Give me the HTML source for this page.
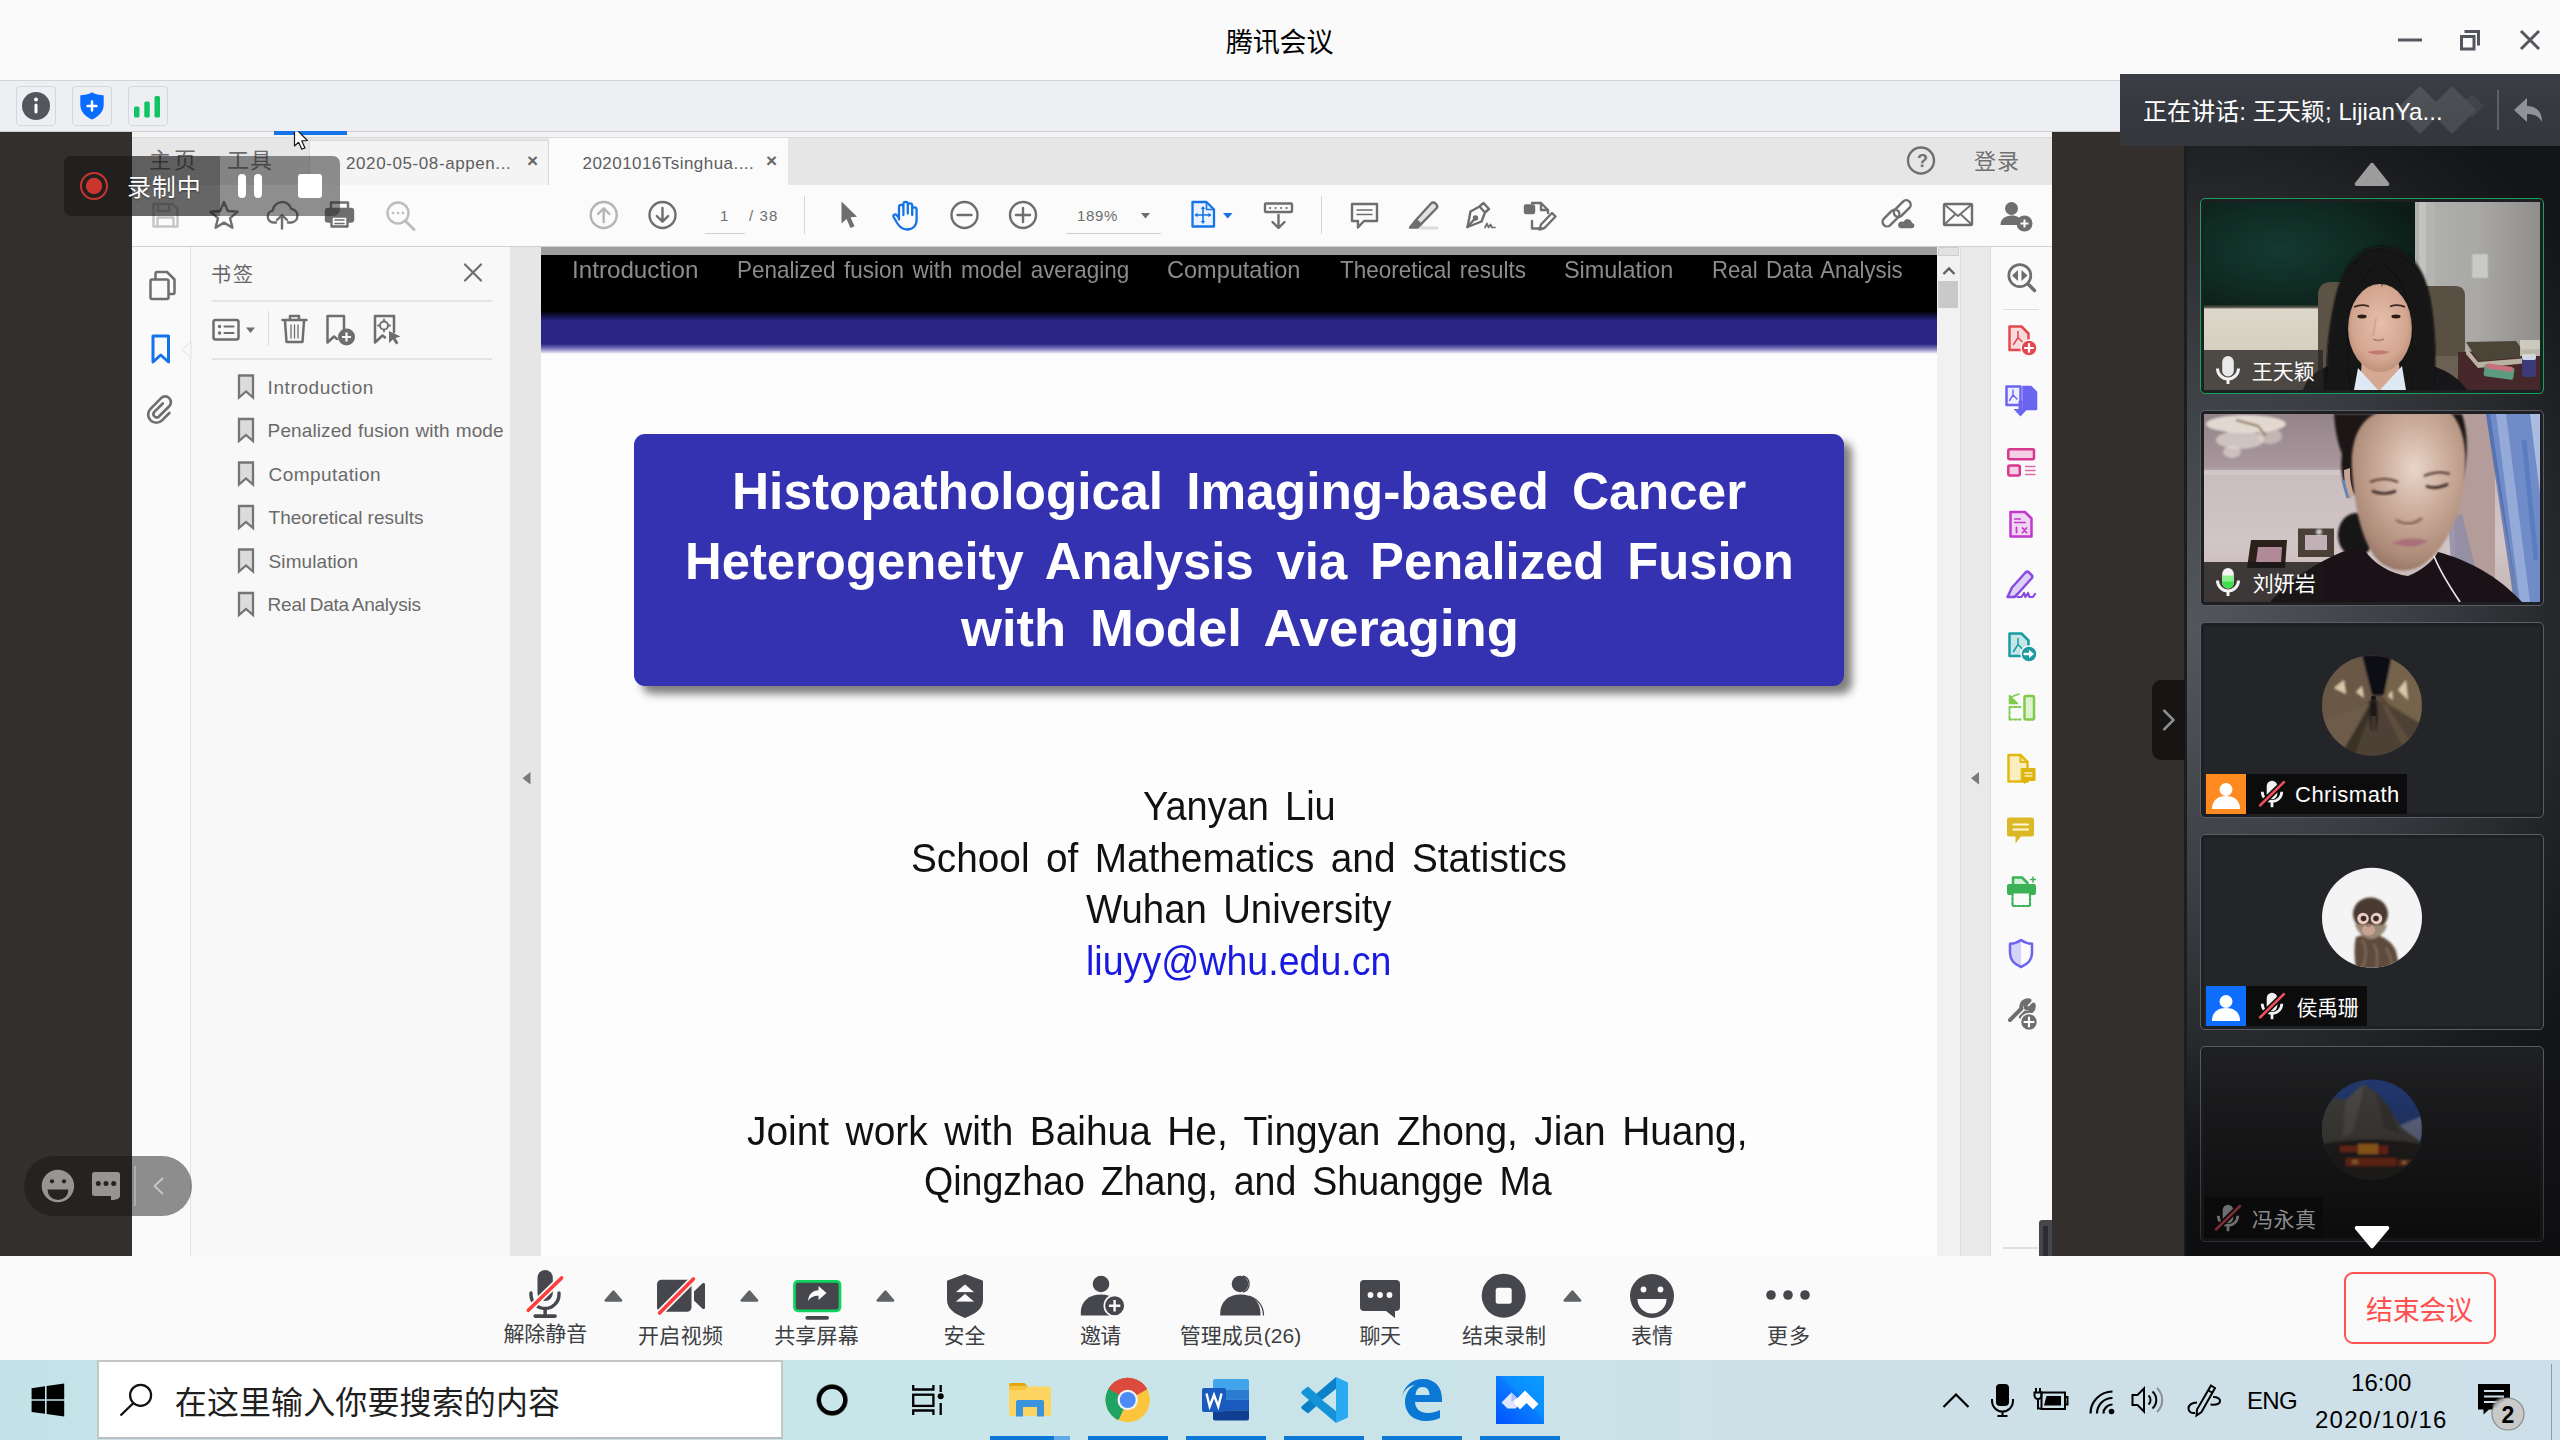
<!DOCTYPE html>
<html lang="zh-CN"><head>
<meta charset="utf-8">
<title>腾讯会议</title>
<style>
*{box-sizing:border-box;margin:0;padding:0}
html,body{width:2560px;height:1440px;overflow:hidden;background:#fafafa}
body{font-family:"Liberation Sans","Noto Sans CJK SC",sans-serif;position:relative;color:#222}
.abs,.t,.b{position:absolute}
.t{white-space:nowrap;line-height:1.4}
.cjk{font-family:"Liberation Sans","Noto Sans CJK SC",sans-serif}
svg.L{position:absolute;left:0;top:0;width:2560px;height:1440px;overflow:visible;pointer-events:none}
#titlebar{left:0;top:0;width:2560px;height:80px;background:#fafafa}
#infobar{left:0;top:80px;width:2560px;height:52px;background:#eeeff3;border-top:1px solid #d4d4d8;border-bottom:1px solid #d0d0d4}
#stage{left:0;top:132px;width:2560px;height:1124px;background:#332f2d}
#shared{left:132px;top:132px;width:1920px;height:1124px;background:#fbfbfb}
#rpanel{left:2184px;top:132px;width:376px;height:1124px;background:radial-gradient(ellipse 135% 52% at 0% 44%,#53565c 0%,#484b51 22%,#3b3e43 45%,#2a2c30 68%,#1b1c1f 88%,#141517 100%);border-left:3px solid #1c1d20}
#toolbar{left:0;top:1256px;width:2560px;height:104px;background:#fafafa}
#taskbar{left:0;top:1360px;width:2560px;height:80px;background:linear-gradient(90deg,#c3e3e8 0,#c8e6ea 30%,#c9e4e9 55%,#cde0e8 70%,#cddfe8 100%)}
.ibox{top:86px;width:40px;height:40px;border:1px solid #d6d7db;border-radius:4px;background:#eeeff3}
/* pdf viewer */
.pui{color:#6e6e6e}
.bm{font-size:19px;color:#6a6a6a}
.hd{font-size:24px;color:#8c8c8c}
.ttl{font-size:52px;font-weight:bold;color:#fff}
.au{font-size:41px;color:#111}
.lbl{font-size:21px;color:#3c3e42}
.nm{font-size:22px;color:#fff}
</style>
</head>
<body>
<div id="titlebar" class="abs"></div>
<div id="infobar" class="abs"></div>
<div id="stage" class="abs"></div>
<div id="shared" class="abs"></div>
<div id="rpanel" class="abs"></div>
<div id="toolbar" class="abs"></div>
<div id="taskbar" class="abs"></div>
<span class="t cjk" style="font-size: 27px; color: rgb(0, 0, 0); letter-spacing: -0.2px; left: 1226px; line-height: 38px; top: 23.85px;">腾讯会议</span>
<svg class="L" viewBox="0 0 2560 1440">
<g fill="none" stroke="#53565c" stroke-width="3">
<path d="M2398 40H2422"></path>
<rect x="2461.5" y="36.5" width="12.5" height="12.5"></rect>
<path d="M2464.5 31.5H2478.5V45.5"></path>
<path d="M2521 31L2539 49M2539 31L2521 49"></path>
</g>
</svg>
<div class="abs ibox" style="left:16px"></div><div class="abs ibox" style="left:72px"></div><div class="abs ibox" style="left:128px"></div>
<svg class="L" viewBox="0 0 2560 1440">
<circle cx="36" cy="106" r="14" fill="#53565c"></circle>
<circle cx="36" cy="99.500" r="2" fill="#fff"></circle><rect x="34.500" y="103.500" width="3" height="10" rx="1.500" fill="#fff"></rect>
<path d="M92 92.200c-3.600 2.200-7.600 3-11.700 3v9.500c0 7.200 5.400 12 11.700 14.800 6.300-2.800 11.700-7.600 11.700-14.800v-9.500c-4.100 0-8.100-.8-11.700-3z" fill="#0a6cff"></path>
<path d="M92 101.500v9M87.500 106h9" stroke="#fff" stroke-width="2.400" stroke-linecap="round"></path>
<rect x="134" y="106.500" width="5.500" height="11" rx="1.500" fill="#10c463"></rect>
<rect x="144.300" y="101.500" width="5.500" height="16" rx="1.500" fill="#10c463"></rect>
<rect x="154.500" y="96" width="5.500" height="21.500" rx="1.500" fill="#10c463"></rect>
</svg>
<!-- ===== PDF viewer backgrounds ===== -->
<div class="b" style="left:132px;top:132px;width:1920px;height:6px;background:#f3f3f3;border-bottom:1px solid #dcdcdc"></div>
<div class="b" style="left:274px;top:131px;width:73px;height:4px;background:#1473e6"></div>
<div class="b" style="left:132px;top:138px;width:1920px;height:47px;background:#e6e6e6"></div>
<div class="b" style="left:309px;top:140px;width:240px;height:45px;background:#f4f4f4;border:1px solid #d8d8d8;border-bottom:none"></div>
<div class="b" style="left:549px;top:138px;width:239px;height:48px;background:#fbfbfb"></div>
<div class="b" style="left:132px;top:185px;width:1920px;height:62px;background:#fbfbfb;border-bottom:1px solid #d0d0d0"></div>
<div class="b" style="left:132px;top:247px;width:59px;height:1009px;background:#fafafa;border-right:1px solid #e2e2e2"></div>
<div class="b" style="left:191px;top:247px;width:319px;height:1009px;background:#f8f8f8"></div>
<div class="b" style="left:510px;top:247px;width:31px;height:1009px;background:#e6e6e6"></div>
<div class="b" style="left:541px;top:247px;width:1396px;height:1009px;background:#fdfdfd"></div>
<div class="b" style="left:541px;top:247px;width:1396px;height:9px;background:#9e9e9e"></div>
<div class="b" style="left:541px;top:255px;width:1396px;height:99px;background:linear-gradient(180deg,#000 0,#000 56px,#141342 61px,#292688 66px,#292688 89px,#8583c0 94px,#fdfdfd 99px)"></div>
<div class="b" style="left:1937px;top:247px;width:23px;height:1009px;background:#f1f1f1"></div>
<div class="b" style="left:1938px;top:247px;width:21px;height:9px;background:#e2e2e2;border:1px solid #cfcfcf"></div>
<div class="b" style="left:1938px;top:281px;width:20px;height:27px;background:#c9c9c9"></div>
<div class="b" style="left:1960px;top:247px;width:30px;height:1009px;background:#e9e9e9;border-left:1px solid #dedede"></div>
<div class="b" style="left:1990px;top:247px;width:62px;height:1009px;background:#fafafa;border-left:1px solid #e0e0e0"></div>
<!-- panel lines -->
<div class="b" style="left:212px;top:300px;width:280px;height:2px;background:#e4e4e4"></div>
<div class="b" style="left:212px;top:358px;width:280px;height:2px;background:#e4e4e4"></div>
<div class="b" style="left:268px;top:311px;width:1px;height:35px;background:#dcdcdc"></div>
<div class="b" style="left:804px;top:196px;width:1px;height:38px;background:#d6d6d6"></div>
<div class="b" style="left:1321px;top:196px;width:1px;height:38px;background:#d6d6d6"></div>
<div class="b" style="left:705px;top:233px;width:40px;height:1px;background:#d0d0d0"></div>
<div class="b" style="left:1066px;top:233px;width:95px;height:1px;background:#d0d0d0"></div>
<div class="b" style="left:2003px;top:309px;width:36px;height:1px;background:#dcdcdc"></div>
<div class="b" style="left:2039px;top:1220px;width:13px;height:36px;background:#45474d;border-radius:3px 0 0 0"></div>
<div class="b" style="left:2043px;top:1226px;width:5px;height:30px;background:#2b2c31"></div>
<div class="b" style="left:2003px;top:1247px;width:35px;height:2px;background:#e0e0e0"></div>
<!-- ===== slide ===== -->
<div class="b" style="left:634px;top:434px;width:1210px;height:252px;border-radius:11px;background:#3432b0;box-shadow:8px 8px 8px rgba(0,0,0,.5)"></div>
<span class="t hd" style="letter-spacing: 0px; transform: scaleX(1.0076); transform-origin: 0px 0px; word-spacing: 2.5px; left: 572.48px; line-height: 34px; top: 253.4px;">Introduction</span>
<span class="t hd" style="letter-spacing: 0px; transform: scaleX(0.9347); transform-origin: 0px 0px; word-spacing: 2.5px; left: 737.07px; line-height: 34px; top: 253.4px;">Penalized fusion with model averaging</span>
<span class="t hd" style="letter-spacing: 0px; transform: scaleX(0.9796); transform-origin: 0px 0px; word-spacing: 2.5px; left: 1167.02px; line-height: 34px; top: 253.4px;">Computation</span>
<span class="t hd" style="letter-spacing: 0px; transform: scaleX(0.9367); transform-origin: 0px 0px; word-spacing: 2.5px; left: 1340px; line-height: 34px; top: 253.4px;">Theoretical results</span>
<span class="t hd" style="letter-spacing: 0px; transform: scaleX(0.9753); transform-origin: 0px 0px; word-spacing: 2.5px; left: 1564.02px; line-height: 34px; top: 253.4px;">Simulation</span>
<span class="t hd" style="letter-spacing: 0px; transform: scaleX(0.9238); transform-origin: 0px 0px; word-spacing: 2.5px; left: 1712.08px; line-height: 34px; top: 253.4px;">Real Data Analysis</span>
<span class="t ttl" style="letter-spacing: 0px; transform: scaleX(0.9881); transform-origin: 0px 0px; word-spacing: 9px; left: 732.04px; line-height: 73px; top: 454.7px;">Histopathological Imaging-based Cancer</span>
<span class="t ttl" style="letter-spacing: 0px; transform: scaleX(0.9768); transform-origin: 0px 0px; word-spacing: 9px; left: 685.07px; line-height: 73px; top: 524.7px;">Heterogeneity Analysis via Penalized Fusion</span>
<span class="t ttl" style="letter-spacing: 0px; transform: scaleX(1.0115); transform-origin: 0px 0px; word-spacing: 9px; left: 961.01px; line-height: 73px; top: 592px;">with Model Averaging</span>
<span class="t au" style="letter-spacing: 0px; transform: scaleX(0.9258); transform-origin: 0px 0px; word-spacing: 6px; left: 1143px; line-height: 57px; top: 778px;">Yanyan Liu</span>
<span class="t au" style="letter-spacing: 0px; transform: scaleX(0.9452); transform-origin: 0px 0px; word-spacing: 6px; left: 910.55px; line-height: 57px; top: 830px;">School of Mathematics and Statistics</span>
<span class="t au" style="letter-spacing: 0px; transform: scaleX(0.9357); transform-origin: 0px 0px; word-spacing: 6px; left: 1086px; line-height: 57px; top: 881px;">Wuhan University</span>
<span class="t au" style="color: rgb(26, 25, 224); letter-spacing: 0px; transform: scaleX(0.9164); transform-origin: 0px 0px; word-spacing: 6px; left: 1086.17px; line-height: 57px; top: 933px;">liuyy@whu.edu.cn</span>
<span class="t au" style="letter-spacing: 0px; transform: scaleX(0.948); transform-origin: 0px 0px; word-spacing: 6px; left: 747px; line-height: 57px; top: 1103px;">Joint work with Baihua He, Tingyan Zhong, Jian Huang,</span>
<span class="t au" style="letter-spacing: 0px; transform: scaleX(0.9163); transform-origin: 0px 0px; word-spacing: 6px; left: 924.08px; line-height: 57px; top: 1153px;">Qingzhao Zhang, and Shuangge Ma</span>
<!-- ===== pdf ui text ===== -->
<span class="t cjk pui" style="font-size: 22px; color: rgb(106, 106, 106); letter-spacing: 3px; left: 149px; line-height: 31px; top: 145px;">主页</span>
<span class="t cjk pui" style="font-size: 22px; color: rgb(106, 106, 106); letter-spacing: 1px; left: 227px; line-height: 31px; top: 144.5px;">工具</span>
<span class="t pui" style="font-size: 17px; color: rgb(94, 94, 94); letter-spacing: 0.592px; left: 346px; line-height: 24px; top: 151.7px;">2020-05-08-appen...</span>
<span class="t pui" style="font-size: 17px; color: rgb(94, 94, 94); letter-spacing: 0.455px; left: 582.5px; line-height: 24px; top: 151.7px;">20201016Tsinghua....</span>
<span class="t pui" style="font-size: 19px; font-weight: bold; color: rgb(102, 102, 102); letter-spacing: 0px; left: 527px; line-height: 27px; top: 146.5px;">×</span>
<span class="t pui" style="font-size: 19px; font-weight: bold; color: rgb(102, 102, 102); letter-spacing: 0px; left: 766px; line-height: 27px; top: 146.5px;">×</span>
<span class="t cjk pui" style="font-size: 22px; color: rgb(112, 112, 112); letter-spacing: 1px; left: 1974px; line-height: 31px; top: 146px;">登录</span>
<span class="t pui" style="font-size: 15px; letter-spacing: 0px; left: 720px; line-height: 21px; top: 204.5px;">1</span>
<span class="t pui" style="font-size: 15px; letter-spacing: 1.108px; left: 749px; line-height: 21px; top: 204.5px;">/ 38</span>
<span class="t pui" style="font-size: 15px; letter-spacing: 0.658px; left: 1077px; line-height: 21px; top: 204.5px;">189%</span>
<span class="t cjk pui" style="font-size: 20px; color: rgb(102, 102, 102); letter-spacing: 2px; left: 211px; line-height: 28px; top: 260.5px;">书签</span>
<span class="t bm" style="letter-spacing: 0.589px; left: 267.6px; line-height: 27px; top: 373.7px;">Introduction</span>
<span class="t bm" style="letter-spacing: 0.112px; word-spacing: 0.622px; left: 267.6px; line-height: 27px; top: 417.2px;">Penalized fusion with mode</span>
<span class="t bm" style="letter-spacing: 0.424px; left: 268.6px; line-height: 27px; top: 460.7px;">Computation</span>
<span class="t bm" style="letter-spacing: -0.011px; word-spacing: -0.131px; left: 268.6px; line-height: 27px; top: 504.2px;">Theoretical results</span>
<span class="t bm" style="letter-spacing: 0.084px; left: 268.6px; line-height: 27px; top: 547.7px;">Simulation</span>
<span class="t bm" style="letter-spacing: -0.216px; word-spacing: -1.223px; left: 267.6px; line-height: 27px; top: 591.2px;">Real Data Analysis</span>
<!-- ===== pdf toolbar icons ===== -->
<svg class="L" viewBox="0 0 2560 1440">
<g fill="none" stroke="#6e6e6e" stroke-width="2.400" stroke-linejoin="round" stroke-linecap="round">
<!-- save (disabled) -->
<g stroke="#c6c6c6"><path d="M153.500 204h19l5 5v17.500h-24z"></path><path d="M158 204v7h11v-7M157.500 226.500v-9h16v9"></path></g>
<!-- star -->
<path d="M224 202l3.800 9 9.700.8-7.400 6.400 2.300 9.500-8.400-5.100-8.400 5.100 2.300-9.500-7.400-6.400 9.700-.8z"></path>
<!-- cloud upload -->
<path d="M276 222.500h-2.500a6 6 0 0 1-.8-11.900 9.500 9.500 0 0 1 18.600-1.600 6.800 6.800 0 0 1 .2 13.500H288"></path><path d="M282 228.500v-13M277 220l5-5 5 5"></path>
<!-- printer -->
<path d="M331 209v-6.500h17v6.500"></path><rect x="326" y="209" width="27" height="12.500" rx="2" fill="#6e6e6e"></rect><rect x="331.500" y="216.500" width="16" height="10" fill="#fbfbfb"></rect><path d="M335 220h9M335 223.500h9" stroke-width="1.600"></path>
<!-- search (disabled) -->
<g stroke="#bdbdbd"><circle cx="398" cy="213" r="10.500"></circle><path d="M405.500 221l8.500 8.500" stroke-width="3"></path><path d="M393 213h.1M398 213h.1M403 213h.1" stroke-width="2.600"></path></g>
<!-- up (disabled) / down -->
<g stroke="#b4b4b4"><circle cx="603.700" cy="215" r="13"></circle><path d="M603.700 222v-13M598 214l5.700-5.700 5.700 5.700"></path></g>
<circle cx="662.500" cy="215" r="13"></circle><path d="M662.500 208v13M656.800 216l5.700 5.700 5.700-5.700"></path>
<!-- minus / plus -->
<circle cx="964.500" cy="215" r="13"></circle><path d="M957.500 215h14"></path>
<circle cx="1023" cy="215" r="13"></circle><path d="M1016 215h14M1023 208v14"></path>
<!-- scroll mode -->
<rect x="1265" y="203.500" width="27" height="8.500" rx="1"></rect><path d="M1270 208h.1M1275.500 208h.1M1281 208h.1M1286.500 208h.1" stroke-width="2.200"></path><path d="M1278.500 215v12.500M1272.500 222l6 6 6-6"></path>
<!-- comment -->
<path d="M1352 204h25v17h-13l-6 6.500v-6.500h-6z"></path><path d="M1357 210h15M1357 214.500h15" stroke-width="1.600"></path>
<!-- highlighter -->
<path d="M1416 220l15-16.500a3 3 0 0 1 4.500 0l.8.800a3 3 0 0 1 0 4.200l-15.500 15.800z" fill="#e2e2e2"></path><path d="M1416 220l-6 7.500h8l3-3.200" fill="#6e6e6e"></path><path d="M1421 228h16" stroke="#dcdcdc" stroke-width="3"></path>
<!-- sign pen -->
<path d="M1483.500 203l5.500 6-4 3.500-5.500-6zM1479.500 206.500l-9 5-3 15.500 14-5.500 3.500-9"></path><path d="M1467.500 227l7-8"></path><circle cx="1475.500" cy="218" r="1.500" fill="#6e6e6e"></circle><path d="M1485 227.500l2-4 1.500 4 2-3 1.500 3h3" stroke-width="1.700"></path>
<!-- stamp / edit -->
<path d="M1532 203h9l7 7v3M1541 203v7h7M1532 221v7.500h10"></path><rect x="1525" y="205.500" width="9" height="7.500" rx="1" fill="#6e6e6e"></rect><path d="M1552 213l3.500 3.500-11 11.500-5 1.500 1.500-5z" fill="#fbfbfb"></path>
<!-- link + cloud -->
<rect x="1892.300" y="204.100" width="20" height="9" rx="4.500" transform="rotate(-45 1902.300 208.600)"></rect>
<rect x="1881" y="213.500" width="20" height="9" rx="4.500" transform="rotate(-45 1891 218)"></rect>
<path d="M1900 229h12a3.400 3.400 0 0 0 .6-6.700 5 5 0 0 0-9.300-1.300 4.100 4.100 0 0 0-3.300 8z" fill="#6e6e6e" stroke="#fbfbfb" stroke-width="1.500"></path>
<!-- mail -->
<rect x="1944" y="204" width="28" height="21" rx="1"></rect><path d="M1944.500 204.500l13.500 11.500 13.500-11.500M1944.500 224.500l10-9.500M1971.500 224.500l-10-9.500" stroke-width="1.800"></path>
<!-- help -->
<circle cx="1921" cy="160.500" r="13" stroke="#707070"></circle>
</g>
<!-- person+ -->
<g fill="#6e6e6e"><circle cx="2011.500" cy="208.500" r="6.500"></circle><path d="M2000.500 225c0-6 5-9.500 11-9.500s9 2.500 10.500 6.500a8 8 0 0 0-4 3z"></path><circle cx="2024.500" cy="223.500" r="8"></circle></g>
<path d="M2024.500 219.500v8M2020.500 223.500h8" stroke="#fbfbfb" stroke-width="2"></path>
<!-- cursor arrow -->
<path d="M841.500 201.500v22l5-4.500 4 9 4-1.800-4-9 6.500-.5z" fill="#6e6e6e"></path>
<!-- hand (blue) -->
<g fill="none" stroke="#1473e6" stroke-width="2.300" stroke-linecap="round" stroke-linejoin="round">
<path d="M899 219.500v-12.500a2.200 2.200 0 0 1 4.400 0v8M903.400 213v-9a2.200 2.200 0 0 1 4.400 0v9M907.800 213.500v-8a2.200 2.200 0 0 1 4.400 0v9M912.200 215v-5.500a2.200 2.200 0 0 1 4.400 0v10c0 6-3.500 10-9.500 10-5 0-7.500-2.500-10-6.500l-3.500-6c-1-2 1.500-3.500 3-2l2.400 3"></path>
</g>
<!-- dropdown arrows -->
<path d="M1141 213h9l-4.500 5.500z" fill="#6e6e6e"></path>
<path d="M1223 213h9.500l-4.750 5.500z" fill="#1473e6"></path>
<!-- fit page (blue) -->
<g fill="none" stroke="#1473e6" stroke-width="2.300" stroke-linejoin="round"><path d="M1192.500 202h14l7.500 7.500v17h-21.500z" fill="#eaf2fd"></path><path d="M1206.500 202v7.500h7.500" stroke-width="1.600"></path></g>
<g stroke="#1473e6" stroke-width="1.600" fill="#1473e6"><path d="M1203 207.500v15M1195.500 215h15"></path><path d="M1203 206l2.200 3h-4.400zM1203 224l2.200-3h-4.400zM1194.500 215l3-2.200v4.400zM1211.500 215l-3-2.200v4.400z" stroke="none"></path></g>
</svg>
<span class="t pui" style="font-size: 18px; font-weight: bold; color: rgb(112, 112, 112); letter-spacing: 0px; left: 1917px; line-height: 25px; top: 149px;">?</span>
<!-- ===== pdf side icons ===== -->
<svg class="L" viewBox="0 0 2560 1440">
<defs>
<path id="bmk" d="M0 0h14v22l-7-6L0 22z"></path>
</defs>
<g fill="none" stroke="#6e6e6e" stroke-width="2.500" stroke-linejoin="round" stroke-linecap="round">
<!-- pages -->
<path d="M155.500 279.500v-6a1.500 1.500 0 0 1 1.500-1.500h10l7.500 7.500v13a1.500 1.500 0 0 1-1.500 1.500h-5.500"></path><path d="M150.500 281a1.500 1.500 0 0 1 1.500-1.500h15a1.500 1.500 0 0 1 1.500 1.500v16.500a1.500 1.500 0 0 1-1.500 1.500h-15a1.500 1.500 0 0 1-1.500-1.500z" fill="#fafafa"></path>
<!-- paperclip -->
<path d="M163 405l-9.500 9.500a3.600 3.600 0 0 0 5 5l11.500-11.500a6.200 6.200 0 0 0-8.800-8.800l-11.500 11.700a8.800 8.800 0 0 0 12.500 12.500l8-8" stroke-width="2.900" transform="translate(160 408.500) scale(.92) translate(-160 -410.500)"></path>
<!-- close X -->
<path d="M465 264.500l16 16M481 264.500l-16 16" stroke-width="2.200"></path>
<!-- list icon -->
<rect x="213.500" y="320" width="25" height="19.500" rx="2"></rect><path d="M219.500 326.500h.1M219.500 333h.1" stroke-width="3.400"></path><path d="M224.500 326.500h9M224.500 333h9" stroke-width="2.200"></path>
<!-- trash -->
<path d="M282.500 320h24M290 319.500v-3.500h9v3.500M285 321l1.500 21h16l1.500-21"></path><path d="M291 325v13M294.500 325v13M298 325v13" stroke-width="1.300"></path>
<!-- bookmark+ -->
<path d="M327.500 316h16.500v14M327.500 316v26.500l6.500-6 3 2.500"></path>
<!-- bookmark find -->
<path d="M375 316h19v16M375 316v26.500l7.500-7 2.500 2"></path><circle cx="384" cy="325.500" r="4" stroke-width="1.800"></circle><path d="M384 319.500v1.500M384 330v1.500M378 325.500h1.500M388.500 325.500h1.500" stroke-width="1.800"></path>
<!-- magnifier tool -->
<circle cx="2019.800" cy="275.600" r="11" stroke-width="2.700"></circle><path d="M2028 284l6.500 6.500" stroke-width="3.400"></path>
</g>
<g fill="#6e6e6e">
<path d="M246 327.500h9l-4.500 5.500z"></path>
<circle cx="346.500" cy="337" r="8.500"></circle>
<path d="M389 331l11.500 5.500-5 1.500 3 5-2.500 1.500-3-5-4 3.500z"></path>
<path d="M2018 270v11l-6-5.500zM2021.500 270v11l6-5.500z"></path>
<path d="M1979 772v12.500l-8-6.250z" fill="#7a7a7a"></path>
<path d="M530.500 772v12.500l-8-6.250z" fill="#7a7a7a"></path>
</g>
<path d="M346.500 332.500v9M342 337h9" stroke="#f8f8f8" stroke-width="2.200"></path>
<!-- scrollbar arrow -->
<path d="M1943.500 274l5.500-5.500 5.500 5.500" fill="none" stroke="#606060" stroke-width="2.400"></path>
<!-- nav pointer -->
<path d="M191 341l-9 8.500 9 8.500z" fill="#f8f8f8" stroke="#e2e2e2" stroke-width="1"></path>
<!-- blue bookmark -->
<path d="M153 336h15.500v26l-7.750-7-7.750 7z" fill="#fafafa" stroke="#1473e6" stroke-width="3" stroke-linejoin="round"></path>
<!-- bookmark items -->
<g fill="#dcdcdc" stroke="#757575" stroke-width="2.300" stroke-linejoin="miter">
<use href="#bmk" x="239" y="375.500"></use><use href="#bmk" x="239" y="419"></use><use href="#bmk" x="239" y="462.500"></use><use href="#bmk" x="239" y="506"></use><use href="#bmk" x="239" y="549.500"></use><use href="#bmk" x="239" y="593"></use>
</g>
</svg>
<!-- ===== pdf right tool pane icons ===== -->
<svg class="L" viewBox="0 0 2560 1440">
<g fill="none" stroke-width="2.500" stroke-linejoin="round" stroke-linecap="round">
<!-- create pdf (red) -->
<path d="M2009.500 326.500h12l7 7v16.500h-19z" fill="#f9d9dc" stroke="#e34850"></path><path d="M2018 331.500v6l-4.500 7M2018 337.500l5 5" stroke="#e34850" stroke-width="1.500"></path>
<circle cx="2029" cy="348" r="8" fill="#e34850" stroke="#fafafa" stroke-width="1.500"></circle><path d="M2029 344v8M2025 348h8" stroke="#fff" stroke-width="2.200"></path>
<!-- export pdf (periwinkle) -->
<path d="M2023 386.500h8l5.500 5.500v17.500h-13.500z" fill="#6a64f0" stroke="#6a64f0" stroke-width="1.500"></path>
<path d="M2006.500 386.500h14v18.500h-14z" fill="#efeefd" stroke="#6a64f0"></path><path d="M2013 390v5l-3.500 5.500M2013 395l4 4" stroke="#6a64f0" stroke-width="1.400"></path>
<path d="M2020.500 402v8" stroke="#6a64f0" stroke-width="4"></path><path d="M2013.500 409h14l-7 7.500z" fill="#6a64f0" stroke="none"></path>
<!-- edit/layout (pink) -->
<rect x="2008.300" y="449.300" width="25.700" height="10" rx="1.500" fill="#f5cfe6" stroke="#d83790"></rect><rect x="2008.300" y="465.500" width="11.500" height="10" rx="1.500" fill="#f5cfe6" stroke="#d83790"></rect>
<path d="M2025.500 466.500h9.500M2025.500 470.500h9.500M2025.500 474.500h9.500" stroke="#e06aa9" stroke-width="1.400"></path>
<!-- fill & sign doc (magenta) -->
<path d="M2010.500 512h14.500l6.500 6.500v18h-21z" fill="#f0d5f3" stroke="#c038cc"></path><path d="M2014.500 519h6M2014.500 522.500h11" stroke="#c038cc" stroke-width="1.300"></path><path d="M2016.500 527.500v5M2022.500 528l4 4.500M2026.500 528l-4 4.500" stroke="#c038cc" stroke-width="1.800"></path>
<!-- sign pen (purple) -->
<path d="M2007.500 597l4.500-9.500 13.500-15a2.500 2.500 0 0 1 3.500 0l2.500 2.500a2.500 2.500 0 0 1 0 3.500l-13 14.500-4 4z" fill="#ddd0f5" stroke="#8a4ce0"></path><path d="M2017.500 597h4l2.500-4 1.500 4 2.500-4 1.500 4h3.500l2-3" stroke="#8a4ce0" stroke-width="2.200"></path>
<!-- send (teal) -->
<path d="M2009.500 633.500h12l7 7v15.500h-19z" fill="#c5e6e8" stroke="#1a9ba0"></path><path d="M2018 638.500v6l-4.500 7M2018 644.500l5 5" stroke="#1a9ba0" stroke-width="1.500"></path>
<circle cx="2029" cy="654" r="8" fill="#1a9ba0" stroke="#fafafa" stroke-width="1.500"></circle><path d="M2024.500 654h6" stroke="#fff" stroke-width="2.400"></path><path d="M2029 649.800l5 4.200-5 4.200z" fill="#fff" stroke="none"></path>
<!-- organize (green) -->
<rect x="2024.500" y="696" width="9.500" height="23.500" rx="1.500" fill="#dff3d0" stroke="#7dcc4a"></rect>
<path d="M2009.500 707h11M2009.500 719.500h11M2009.500 707v12.500" stroke="#7dcc4a" stroke-width="2" stroke-dasharray="2.500 2"></path>
<path d="M2009.500 695.500v8h8zM2011 697l8-3" stroke="#7dcc4a" fill="#7dcc4a" stroke-width="1.500"></path>
<!-- comment doc (yellow) -->
<path d="M2008.500 755h12l7 7v19.500h-19z" fill="#faedc0" stroke="#e4b90f"></path><path d="M2020.500 755v7h7" stroke="#e4b90f" stroke-width="2"></path>
<path d="M2021.500 768.500h13.500v12h-8l-2.500 3v-3h-3z" fill="#dcb40a" stroke="#dcb40a" stroke-width="1"></path><path d="M2025 773h7M2025 776h7" stroke="#faedc0" stroke-width="1.300"></path>
<!-- comment (yellow) -->
<path d="M2009 817.500h23a2 2 0 0 1 2 2v15a2 2 0 0 1-2 2h-11l-5.500 7v-7h-6.500a2 2 0 0 1-2-2v-15a2 2 0 0 1 2-2z" fill="#dcb827" stroke="none"></path><path d="M2013.500 824.500h14.500M2013.500 829.500h14.500" stroke="#fdf6d8" stroke-width="2"></path>
<!-- print production (green) -->
<path d="M2013 884v-6.500h9l5.500 5.500v1" fill="#d4efd9" stroke="#3bb255"></path><rect x="2007" y="884" width="29" height="11" rx="2" fill="#3bb255" stroke="none"></rect><path d="M2012.500 893.500v12.500h17.500v-12.500" stroke="#3bb255" stroke-width="2.200" stroke-dasharray="2.600 1.800" fill="#fafafa"></path><path d="M2033 877v5M2030.500 879.500h5" stroke="#3bb255" stroke-width="1.400"></path>
<!-- protect (shield) -->
<path d="M2021 940c-3.500 2.600-7 3.600-11 3.800v9.200c0 7 4.500 11.300 11 14z" fill="#d5d3f8" stroke="none"></path><path d="M2021 940c3.500 2.600 7 3.600 11 3.800v9.200c0 7-4.500 11.300-11 14-6.500-2.700-11-7-11-14v-9.200c4-.2 7.500-1.200 11-3.800z" stroke="#6b64ec"></path>
<!-- wrench + -->
<path d="M2010 1020l11.500-11.500a6.500 6.500 0 0 1 8-8l-4 4 .5 3.500 3.500.5 4-4a6.500 6.500 0 0 1-8 8l-4.500 4.500" stroke="#6e6e6e" stroke-width="4"></path>
<circle cx="2029" cy="1022" r="8.500" fill="#6e6e6e" stroke="#fafafa" stroke-width="1.500"></circle><path d="M2029 1017.500v9M2024.500 1022h9" stroke="#fff" stroke-width="2.200"></path>
</g>
</svg>
<!-- ===== right participants panel ===== -->
<div class="b tile" style="top:198px;border-color:#12a65a"></div>
<div class="b tile" style="top:410px"></div>
<div class="b tile" style="top:622px"></div>
<div class="b tile" style="top:834px"></div>
<div class="b tile" style="top:1046px"></div>
<div class="b tin" style="top:626px"></div>
<div class="b tin" style="top:838px"></div>
<div class="b tin" style="top:1050px;background:linear-gradient(180deg,#202123 0,#19191b 60%,#101011 100%)"></div>
<style>
.tile{left:2200px;width:344px;height:196px;border:1px solid #5b5f65;border-radius:5px;background:#1e1f22}
.tin{left:2204px;width:336px;height:188px;background:#242528}
</style>
<svg class="L" viewBox="0 0 2560 1440">
<defs>
<filter id="b1" x="-20%" y="-20%" width="140%" height="140%"><feGaussianBlur stdDeviation="1.200"></feGaussianBlur></filter>
<filter id="b3" x="-30%" y="-30%" width="160%" height="160%"><feGaussianBlur stdDeviation="3"></feGaussianBlur></filter>
<filter id="b6" x="-30%" y="-30%" width="160%" height="160%"><feGaussianBlur stdDeviation="6"></feGaussianBlur></filter>
<clipPath id="c1"><rect x="2204" y="202" width="336" height="188"></rect></clipPath>
<clipPath id="c2"><rect x="2204" y="414" width="336" height="188"></rect></clipPath>
<clipPath id="a3"><circle cx="2372" cy="705.500" r="50"></circle></clipPath>
<clipPath id="a4"><circle cx="2372" cy="917.700" r="50"></circle></clipPath>
<clipPath id="a5"><circle cx="2372" cy="1129.500" r="50"></circle></clipPath>
<linearGradient id="g1w" x1="0" y1="0" x2="1" y2="0"><stop offset="0" stop-color="#b1b1ae"></stop><stop offset=".5" stop-color="#a9a8a6"></stop><stop offset="1" stop-color="#8f8e8d"></stop></linearGradient>
<linearGradient id="g1t" x1="0" y1="0" x2="0" y2="1"><stop offset="0" stop-color="#c9c3b5"></stop><stop offset=".35" stop-color="#e2ded2"></stop><stop offset="1" stop-color="#cfc8b8"></stop></linearGradient>
<radialGradient id="g1b" cx=".35" cy=".45" r=".7"><stop offset="0" stop-color="#143a2f"></stop><stop offset=".6" stop-color="#0f2a22"></stop><stop offset="1" stop-color="#0c1c17"></stop></radialGradient>
<linearGradient id="g2bg" x1="0" y1="0" x2="0" y2="1"><stop offset="0" stop-color="#94848a"></stop><stop offset=".28" stop-color="#a8989d"></stop><stop offset=".33" stop-color="#c9bdc0"></stop><stop offset=".7" stop-color="#d2c5c6"></stop><stop offset="1" stop-color="#c4b4b4"></stop></linearGradient>
<radialGradient id="g2f" cx=".55" cy=".36" r=".7"><stop offset="0" stop-color="#e8d6ca"></stop><stop offset=".4" stop-color="#cdae9c"></stop><stop offset=".8" stop-color="#ad8b79"></stop><stop offset="1" stop-color="#8f6e5e"></stop></radialGradient>
<radialGradient id="g1f" cx=".5" cy=".45" r=".6"><stop offset="0" stop-color="#e6bfa9"></stop><stop offset=".7" stop-color="#d3a690"></stop><stop offset="1" stop-color="#b58872"></stop></radialGradient>
</defs>
<!-- tile 1 photo -->
<g clip-path="url(#c1)">
<rect x="2204" y="202" width="336" height="188" fill="url(#g1t)"></rect>
<rect x="2204" y="202" width="211" height="105.500" fill="url(#g1b)"></rect>
<rect x="2204" y="305.500" width="118" height="3" fill="#5a5a50" opacity=".7"></rect>
<rect x="2415" y="202" width="125" height="188" fill="url(#g1w)"></rect>
<rect x="2419" y="202" width="7" height="100" fill="#c2c3c0"></rect><rect x="2426" y="202" width="9" height="100" fill="#b4b5b2"></rect>
<rect x="2472" y="254" width="16" height="24" rx="1.500" fill="#c9c9c7" stroke="#b5b5b3" stroke-width="1"></rect>
<!-- chair -->
<path d="M2318 390v-95c0-9 5-13 14-13h18v108z" fill="#5d5246"></path><path d="M2425 286h30c7 0 10 4 10 10v52c0 8-4 12-10 12h-30z" fill="#5a4f43"></path><path d="M2430 356h32v34h-32z" fill="#6a6053"></path>
<!-- desk + stuff -->
<path d="M2458 352l82-3v41h-82z" fill="#47282a"></path><path d="M2466 342l50-1 12 16-50 4z" fill="#4b4538"></path><path d="M2466 347l12 15 50-4v5l-50 5-12-14z" fill="#b9b3a2"></path>
<rect x="2484" y="366" width="30" height="12" rx="2" fill="#5d9a80" transform="rotate(8 2499 372)"></rect><rect x="2486" y="365" width="27" height="5" rx="2" fill="#c8707a" transform="rotate(8 2499 368)"></rect>
<rect x="2522" y="354" width="14" height="23" rx="3" fill="#3c3a78"></rect><rect x="2522" y="354" width="14" height="6" rx="2" fill="#cfd6e8"></rect><rect x="2520" y="340" width="20" height="16" fill="#d8d8c8" opacity=".8"></rect>
<!-- person -->
<path d="M2303 390c4-14 18-24 40-28l60-2c30 3 52 12 64 30z" fill="#17171a"></path>
<path d="M2328 390c-2-24 0-56 6-86 7-36 22-57 46-58 27 0 44 18 50 52 5 30 6 62 2 92z" fill="#131313" filter="url(#b1)"></path>
<path d="M2362 356h36l4 34h-42z" fill="#d4a892"></path><path d="M2358 368l20 22h-24zM2402 366l-22 24h26z" fill="#dfe9f3"></path>
<ellipse cx="2380" cy="328" rx="32" ry="44" fill="url(#g1f)"></ellipse>
<path d="M2381 262c-14 6-28 26-33 56-2 20-2 44 2 72h-22c-2-28 0-58 8-88 7-30 22-48 45-52z" fill="#131313" filter="url(#b1)"></path>
<path d="M2381 262c16 8 26 26 30 50 3 22 4 50 2 78h20c4-30 2-64-4-92-6-28-22-42-48-46z" fill="#131313" filter="url(#b1)"></path>
<path d="M2376 262q5-4 10 0l-4 26z" fill="#1a1716" opacity=".6"></path>
<path d="M2354 307q8-3.500 15-.5M2390 306.500q8-3 15 .5" stroke="#3e2a22" stroke-width="1.800" fill="none"></path>
<ellipse cx="2362" cy="316.500" rx="4.600" ry="1.900" fill="#2a1c18"></ellipse><ellipse cx="2396" cy="316.500" rx="4.600" ry="1.900" fill="#2a1c18"></ellipse>
<path d="M2373 339q5 3 11 0" stroke="#b07f6a" stroke-width="1.600" fill="none"></path><path d="M2376 318l-3 18" stroke="#c99a84" stroke-width="2" fill="none" opacity=".6"></path>
<path d="M2367 352q12-3.500 23 0q-11 5.500-23 0z" fill="#c27a72"></path>
</g>
<!-- tile 2 photo -->
<g clip-path="url(#c2)">
<rect x="2204" y="414" width="336" height="188" fill="url(#g2bg)"></rect>
<rect x="2204" y="470" width="140" height="5" fill="#d6cccd" opacity=".8"></rect>
<!-- chandelier -->
<g filter="url(#b1)" fill="#efe6dc"><ellipse cx="2246" cy="424" rx="40" ry="9" opacity=".85"></ellipse><ellipse cx="2240" cy="440" rx="24" ry="9" opacity=".6"></ellipse><ellipse cx="2232" cy="452" rx="9" ry="6" opacity=".55"></ellipse><ellipse cx="2270" cy="436" rx="12" ry="8" opacity=".45"></ellipse><path d="M2236 420l22 6 8 10" stroke="#8a7050" stroke-width="2" fill="none"></path></g>
<!-- curtain / right wall -->
<rect x="2455" y="414" width="40" height="188" fill="#b49c9a"></rect>
<path d="M2486 414h54v188h-22z" fill="#6f8cc8"></path><path d="M2496 414h10l24 188h-10z" fill="#9db3dd" opacity=".8"></path><path d="M2516 414h14l10 80v-80z" fill="#b9c8e6" opacity=".8"></path><path d="M2488 414l28 188" stroke="#4a68aa" stroke-width="4" opacity=".7"></path><path d="M2524 440l12 120" stroke="#4f73bd" stroke-width="5" opacity=".6"></path>
<path d="M2448 520l14-6 22 88h-30z" fill="#8d8ca6" opacity=".8"></path>
<!-- frames -->
<path d="M2251 540h36l-2 28h-38z" fill="#2c201b"></path><path d="M2258 547h24l-1 15h-25z" fill="#b08a98"></path>
<rect x="2298" y="528.500" width="36" height="28.500" fill="#4a4038"></rect><rect x="2305" y="535" width="22" height="15" fill="#c2b0b8"></rect><circle cx="2319" cy="532" r="3" fill="#eee" opacity=".8" filter="url(#b1)"></circle>
<!-- hair, face -->
<path d="M2336 414h126c6 18 6 40 2 60l-6 20h-108c-8-10-10-24-8-40-8-20-10-48-6-70z" fill="#1d1719" filter="url(#b1)"></path>
<ellipse cx="2356" cy="535" rx="18" ry="22" fill="#171214" filter="url(#b1)"></ellipse>
<path d="M2352 470c-2-30 8-52 28-58l70 0c14 14 18 40 14 70-4 36-18 66-40 82-14 10-34 8-46-4-16-16-24-54-26-90z" fill="url(#g2f)" filter="url(#b1)"></path>
<path d="M2344 470c0 10 2 24 6 30l4-6c-4-10-4-20-4-26z" fill="#c7a696"></path><path d="M2343 480q3 12 5 18" stroke="#5f86b8" stroke-width="3" fill="none"></path>
<path d="M2370 482q14-6 28 0M2424 476q14-6 26-2" stroke="#5a4038" stroke-width="2.200" fill="none" filter="url(#b1)"></path>
<path d="M2372 491q12 5 24 0M2426 486q10 4 22-2" stroke="#3a2a26" stroke-width="2.600" fill="none" filter="url(#b1)"></path>
<path d="M2396 520q14 8 26-2" stroke="#8a6654" stroke-width="2.500" fill="none" filter="url(#b1)"></path>
<path d="M2392 543q18-8 36-2q-14 10-36 2z" fill="#a8707a" filter="url(#b1)"></path>
<!-- clothes -->
<path d="M2270 602c20-22 40-36 72-50l20-6c10 18 30 28 46 30 14-6 24-14 30-24 30 8 60 24 84 50z" fill="#1b1218"></path>
<path d="M2434 556c6 16 18 34 26 46" stroke="#e6e6ea" stroke-width="1.700" fill="none"></path>
</g>
<!-- avatar 3: night street -->
<g clip-path="url(#a3)">
<rect x="2322" y="655" width="100" height="102" fill="#574838"></rect>
<g filter="url(#b1)">
<path d="M2322 655h44l8 42-8 6-44 22z" fill="#6b5946"></path><path d="M2422 655h-34l-6 40 6 8 34 22z" fill="#75634c"></path>
<path d="M2362 655h30l-8 40h-12z" fill="#0c0c12"></path>
<path d="M2322 724l46-22h12l42 22v34h-100z" fill="#4e4134"></path>
<path d="M2322 722l48-20-28 56h-20z" fill="#6c5c48"></path><path d="M2340 756l28-48 4 0-18 48z" fill="#3a3028"></path><path d="M2386 704l26 40-8 6-22-44z" fill="#5d4e3e"></path>
<path d="M2334 688l10-8 2 14zM2356 692l6-6 2 12zM2398 690l8-10 2 20zM2388 696l4-6 1 10z" fill="#e9dcb8" opacity=".85"></path>
</g>
<path d="M2370.500 700h6l1 16-2 14h-4l-2-14z" fill="#1a1614" filter="url(#b1)"></path><circle cx="2373.500" cy="698" r="2.500" fill="#181412"></circle><path d="M2371 716h5l-.5 14h-4z" fill="#5a4a3e" opacity=".6"></path>
</g>
<!-- avatar 4: monkey -->
<g clip-path="url(#a4)">
<rect x="2322" y="867" width="100" height="102" fill="#f4f4f4"></rect>
<g filter="url(#b1)">
<path d="M2356 969c-2-14-2-24 0-32l14-4c12 2 22 8 26 18l4 18z" fill="#5e4c3e"></path><path d="M2362 940c6 8 4 20 0 29M2374 944c4 8 4 18 2 25M2386 948c4 6 6 14 6 21" stroke="#8c7c68" stroke-width="2" fill="none" opacity=".7"></path>
<ellipse cx="2370.500" cy="914" rx="17.500" ry="16.500" fill="#4a3a30"></ellipse><path d="M2355 924c2 8 8 14 16 15 8-1 14-6 16-14z" fill="#9a8a74"></path>
</g>
<circle cx="2363" cy="918.500" r="5.800" fill="#e9cbc4"></circle><circle cx="2376.500" cy="918.500" r="5.800" fill="#e9cbc4"></circle><circle cx="2363.500" cy="918.500" r="2.800" fill="#3a2a26"></circle><circle cx="2376" cy="918.500" r="2.800" fill="#3a2a26"></circle>
<ellipse cx="2368.500" cy="930" rx="6.500" ry="5.500" fill="#caa294"></ellipse><path d="M2366 926h5" stroke="#7a5a50" stroke-width="1.200"></path>
</g>
<!-- avatar 5: mountain -->
<g clip-path="url(#a5)">
<rect x="2322" y="1079" width="100" height="102" fill="#2c4c9c"></rect>
<g filter="url(#b1)">
<path d="M2398 1126l24-10v24l-16 2z" fill="#8a94b8"></path>
<path d="M2320 1112l14-14 12 2 10-10 8-6 12 8 12 14 14 22 22 16v36h-104z" fill="#57534e"></path><path d="M2346 1100l10-10 8-6-4 20-8 30-10 4z" fill="#7a7874" opacity=".55"></path><path d="M2376 1092l14 16 10 26-16-6z" fill="#3e3a36" opacity=".6"></path>
<path d="M2322 1144c30-6 70-6 100 0v38h-100z" fill="#2c2620"></path>
<rect x="2340" y="1146" width="20" height="6" fill="#a63a1c"></rect><rect x="2358" y="1144" width="20" height="10" fill="#ec9228"></rect><rect x="2378" y="1146" width="10" height="8" fill="#a8301c"></rect>
<rect x="2346" y="1158" width="50" height="8" fill="#a83a1e"></rect><rect x="2352" y="1160" width="6" height="4" fill="#f0a040"></rect><rect x="2398" y="1160" width="14" height="6" fill="#9a3a20"></rect><rect x="2402" y="1161" width="4" height="3" fill="#f0b060"></rect>
<path d="M2322 1168h100v14h-100z" fill="#2e2a20"></path>
</g>
<rect x="2322" y="1079" width="100" height="102" fill="#0a0a0c" opacity=".25"></rect>
</g>
</svg>
<!-- ===== panel labels / banner ===== -->
<div class="b" style="left:2204px;top:350px;width:118.500px;height:40px;background:rgba(38,36,34,.78)"></div>
<div class="b" style="left:2204px;top:562px;width:118.500px;height:40px;background:rgba(26,24,24,.8)"></div>
<div class="b" style="left:2206px;top:774px;width:40px;height:40px;background:#ff8a1f"></div>
<div class="b" style="left:2246px;top:774px;width:160.500px;height:40px;background:#0c0c0d"></div>
<div class="b" style="left:2206px;top:986px;width:40px;height:40px;background:#0d6efd"></div>
<div class="b" style="left:2246px;top:986px;width:120.500px;height:40px;background:#0c0c0d"></div>
<div class="b" style="left:2204px;top:1198px;width:118.500px;height:40px;background:#0b0b0c"></div>
<div class="b" style="left:2185px;top:1040px;width:375px;height:216px;background:linear-gradient(180deg,rgba(10,10,11,0) 0,rgba(10,10,11,.35) 60%,rgba(10,10,11,.6) 100%)"></div>
<div class="b" style="left:2152px;top:680px;width:33px;height:80px;background:#171514;border-radius:9px 0 0 9px"></div>
<div class="b" style="left:2120px;top:74px;width:440px;height:72px;background:linear-gradient(180deg,#3b3f45 0,#363a40 50%,#33363b 100%)"></div>
<div class="b" style="left:2497px;top:90px;width:1.500px;height:40px;background:#5c6067"></div>
<span class="t cjk" style="font-size: 24px; color: rgb(255, 255, 255); letter-spacing: 0.066px; left: 2143px; line-height: 34px; top: 94.75px;">正在讲话: 王天颖; LijianYa...</span>
<span class="t cjk nm" style="font-size: 21px; letter-spacing: 0px; left: 2251.7px; line-height: 29px; top: 356.5px;">王天颖</span>
<span class="t cjk nm" style="font-size: 21px; letter-spacing: 0px; left: 2252.7px; line-height: 29px; top: 568.5px;">刘妍岩</span>
<span class="t cjk nm" style="font-size: 22px; letter-spacing: 0.499px; left: 2295px; line-height: 31px; top: 778.5px;">Chrismath</span>
<span class="t cjk nm" style="font-size: 21px; letter-spacing: -0.35px; left: 2296.4px; line-height: 29px; top: 992.5px;">侯禹珊</span>
<span class="t cjk nm" style="font-size: 21px; color: rgb(140, 140, 140); letter-spacing: 0.5px; left: 2252px; line-height: 29px; top: 1204.5px;">冯永真</span>
<svg class="L" viewBox="0 0 2560 1440">
<defs>
<g id="micw"><rect x="-5.800" y="-14" width="11.600" height="20.500" rx="5.800"></rect><path d="M-10.500 -1.500a10.500 10.500 0 0 0 21 0" fill="none" stroke-width="3" stroke="currentColor"></path><path d="M0 9v5" stroke="currentColor" stroke-width="3" fill="none"></path></g>
<g id="micm" transform="scale(1.15)"><rect x="-4.600" y="-11.500" width="9.200" height="16" rx="4.600" fill="currentColor"></rect><path d="M-8.500 -2a8.500 8.500 0 0 0 17 0" fill="none" stroke-width="2.400" stroke="currentColor"></path><path d="M0 7v4.500" stroke="currentColor" stroke-width="2.400" fill="none"></path><path d="M-11 10.500L11 -11" stroke="#0c0c0d" stroke-width="5"></path><path d="M-11 10.500L11 -11" stroke="#f0505a" stroke-width="2.300"></path></g>
<g id="usr"><circle cx="0" cy="-6.500" r="6.500"></circle><path d="M-14 13c0-9 6-13 14-13s14 4 14 13z"></path></g>
</defs>
<!-- banner watermark + reply -->
<g opacity=".11" fill="#fff"><path d="M2396 110l24-24 24 24-24 24z"></path><path d="M2428 110l24-24 24 24-24 24z" opacity=".9"></path><path d="M2462 104l10-10 12 12-12 12z" opacity=".5"></path></g>
<path d="M2527 98v8c9 0 15 5 15 16-3-6-8-8-15-8v8l-13-12z" fill="#8f9399"></path>
<!-- scroll triangles -->
<path d="M2370.500 163.500a2 2 0 0 1 3 0l15.500 19.500a2 2 0 0 1-1.500 3h-31a2 2 0 0 1-1.500-3z" fill="#9c9c9c"></path>
<path d="M2373.500 1247.500a2 2 0 0 1-3 0l-15.500-18.500a2 2 0 0 1 1.500-3h31a2 2 0 0 1 1.500 3z" fill="#fff"></path>
<!-- collapse chevron -->
<path d="M2163.500 710l10 10-10 10" fill="none" stroke="#8c8c8c" stroke-width="2.500"></path>
<!-- mics -->
<use href="#micw" x="2228" y="370" fill="#e9e9e9" color="#f2f2f2"></use>
<use href="#micw" x="2228" y="582" fill="#f4f4f4" color="#f4f4f4"></use>
<path d="M2222.200 580h11.600v2.700a5.800 5.800 0 0 1-11.600 0z" fill="#3fe04a"></path><rect x="2222.200" y="575.500" width="11.600" height="6" fill="#8df08f"></rect>
<use href="#micm" x="2272" y="794" color="#f2f2f2"></use>
<use href="#micm" x="2272" y="1006" color="#f2f2f2"></use>
<g opacity=".5"><use href="#micm" x="2228" y="1218" color="#d0d0d0"></use></g>
<use href="#usr" x="2226" y="796" fill="#fff"></use>
<use href="#usr" x="2226" y="1008" fill="#fff"></use>
</svg>
<!-- ===== bottom toolbar ===== -->
<span class="t cjk lbl" style="letter-spacing: -0.033px; left: 503.4px; line-height: 29px; top: 1319.25px;">解除静音</span>
<span class="t cjk lbl" style="letter-spacing: 0.333px; left: 638px; line-height: 29px; top: 1321.25px;">开启视频</span>
<span class="t cjk lbl" style="letter-spacing: 0.167px; left: 774.2px; line-height: 29px; top: 1321.25px;">共享屏幕</span>
<span class="t cjk lbl" style="letter-spacing: 0.1px; left: 943.5px; line-height: 29px; top: 1321.25px;">安全</span>
<span class="t cjk lbl" style="letter-spacing: -0.8px; left: 1080px; line-height: 29px; top: 1321.25px;">邀请</span>
<span class="t cjk lbl" style="letter-spacing: 0.007px; left: 1179.8px; line-height: 29px; top: 1320.75px;">管理成员(26)</span>
<span class="t cjk lbl" style="letter-spacing: -0.5px; left: 1359.5px; line-height: 29px; top: 1321.25px;">聊天</span>
<span class="t cjk lbl" style="letter-spacing: 0px; left: 1462px; line-height: 29px; top: 1321.25px;">结束录制</span>
<span class="t cjk lbl" style="letter-spacing: 0px; left: 1631px; line-height: 29px; top: 1321.25px;">表情</span>
<span class="t cjk lbl" style="letter-spacing: 1px; left: 1767px; line-height: 29px; top: 1321.25px;">更多</span>
<div class="b" style="left:2344px;top:1272px;width:152px;height:72px;border:2px solid #ff5252;border-radius:9px"></div>
<span class="t cjk" style="font-size: 27px; color: rgb(255, 79, 79); letter-spacing: -0.333px; left: 2366px; line-height: 38px; top: 1292.25px;">结束会议</span>
<svg class="L" viewBox="0 0 2560 1440">
<defs><path id="tri" d="M9 0.800a1.200 1.200 0 0 1 1.800 0l7.800 9a1.200 1.200 0 0 1-.9 2h-15.600a1.200 1.200 0 0 1-.9-2z"></path></defs>
<g fill="#5f6267"><use href="#tri" x="603.500" y="1290"></use><use href="#tri" x="739.500" y="1290"></use><use href="#tri" x="875.500" y="1290"></use><use href="#tri" x="1562.500" y="1290"></use></g>
<g fill="#46474c">
<!-- mic -->
<rect x="537.500" y="1270" width="15.300" height="31" rx="7.650"></rect>
<path d="M531 1293v1.500a14 14 0 0 0 28 0v-1.500" fill="none" stroke="#46474c" stroke-width="3.400" stroke-linecap="round"></path>
<rect x="543.400" y="1307" width="3.500" height="8"></rect><rect x="533.400" y="1314.300" width="23.500" height="3.600" rx="1.800"></rect>
<!-- camera -->
<rect x="657" y="1279.800" width="34.500" height="32" rx="4.500"></rect><path d="M694 1291.500l8.500-8.200a1.500 1.500 0 0 1 2.500 1v23.400a1.500 1.500 0 0 1-2.500 1l-8.500-8.200z"></path>
<!-- share screen -->
<rect x="794.500" y="1281.300" width="45.500" height="29.500" rx="3.500" stroke="#0fd45f" stroke-width="2.700"></rect><rect x="805.400" y="1316" width="23.600" height="3.700" rx="1.850"></rect>
<!-- shield -->
<path d="M965 1274l17 6.200a1.500 1.500 0 0 1 1 1.400v18.400c0 8.500-7 13.800-18 18-11-4.200-18-9.500-18-18v-18.400a1.500 1.500 0 0 1 1-1.400z"></path>
<!-- invite -->
<circle cx="1101" cy="1284" r="8.300"></circle><path d="M1080.800 1315.600v-3c0-11 8-18 20.200-18 6 0 10.500 1.500 14 4.500l-2 16.500z"></path>
<circle cx="1114.600" cy="1305.700" r="10.300" stroke="#fafafa" stroke-width="1.600"></circle>
<!-- members -->
<path d="M1243 1276a8.300 8.300 0 0 1 0 16M1249 1296c8 3 14.500 9 14.500 19.600" fill="none" stroke="#46474c" stroke-width="1.300"></path>
<circle cx="1240" cy="1284" r="8.300"></circle><path d="M1220.200 1315.600v-2c0-12 8.500-19 20.300-19s20 7 20 19v2z"></path>
<!-- chat -->
<path d="M1364 1280h32a4 4 0 0 1 4 4v23a4 4 0 0 1-4 4h-1v7l-9-7h-22a4 4 0 0 1-4-4v-23a4 4 0 0 1 4-4z"></path>
<!-- end recording -->
<circle cx="1503.700" cy="1295.700" r="22"></circle>
<!-- emoji -->
<circle cx="1652" cy="1296" r="22"></circle>
<!-- more -->
<circle cx="1771" cy="1295" r="4.800"></circle><circle cx="1788" cy="1295" r="4.800"></circle><circle cx="1805" cy="1295" r="4.800"></circle>
</g>
<g fill="#fafafa">
<path d="M965 1284l10 8.500h-20zM965 1293.500l10 8.500h-20z" stroke="#46474c" stroke-width=".800"></path>
<circle cx="1370.500" cy="1295" r="2.900"></circle><circle cx="1380" cy="1295" r="2.900"></circle><circle cx="1389.500" cy="1295" r="2.900"></circle>
<rect x="1495.700" y="1287.700" width="16" height="16" rx="2.500"></rect>
<circle cx="1643.500" cy="1289.500" r="2.900"></circle><circle cx="1660.500" cy="1289.500" r="2.900"></circle>
<path d="M1637.500 1299h29a14.500 14.500 0 0 1-29 0z"></path>
<path d="M826.500 1293l-8-7v4.200c-6 .3-10 4-10.500 10.800 2.500-3.800 5.500-5.200 10.500-5.200v4.200z"></path>
</g>
<path d="M1114.600 1300v11.400M1108.900 1305.700h11.400" stroke="#fafafa" stroke-width="2.400"></path>
<!-- red slashes -->
<path d="M528.300 1310.300L561.600 1278" stroke="#fafafa" stroke-width="7"></path><path d="M528.300 1310.300L561.600 1278" stroke="#ff3b3b" stroke-width="3.600" stroke-linecap="round"></path>
<path d="M659.600 1313L693.400 1279" stroke="#fafafa" stroke-width="7"></path><path d="M659.600 1313L693.400 1279" stroke="#ff3b3b" stroke-width="3.600" stroke-linecap="round"></path>
</svg>
<!-- ===== windows taskbar ===== -->
<div class="b" style="left:97px;top:1360px;width:686px;height:79px;background:#fff;border:2px solid #c6c6c6;border-bottom-color:#bdbdbd"></div>
<span class="t cjk" style="font-size: 32px; color: rgb(31, 31, 31); letter-spacing: 0.109px; left: 174.8px; line-height: 45px; top: 1381.4px;">在这里输入你要搜索的内容</span>
<div class="b" style="left:990px;top:1436px;width:64px;height:4px;background:#0a78d4"></div><div class="b" style="left:1054px;top:1436px;width:16px;height:4px;background:#62aae8"></div>
<div class="b ul" style="left:1088px"></div><div class="b ul" style="left:1186px"></div><div class="b ul" style="left:1284px"></div><div class="b ul" style="left:1382px"></div><div class="b ul" style="left:1480px"></div>
<div class="b" style="left:2551px;top:1364px;width:1px;height:76px;background:#8e9aa2"></div>
<style>.ul{top:1436px;width:80px;height:4px;background:#0a78d4}.tk{font-size:24px;color:#000}</style>
<span class="t tk" style="letter-spacing: -0.67px; left: 2247px; line-height: 34px; top: 1383.7px;">ENG</span>
<span class="t tk" style="letter-spacing: 0.072px; left: 2351px; line-height: 34px; top: 1366px;">16:00</span>
<span class="t tk" style="letter-spacing: 1.248px; left: 2315px; line-height: 34px; top: 1402.5px;">2020/10/16</span>
<svg class="L" viewBox="0 0 2560 1440">
<defs>
<linearGradient id="tmg" x1="0" y1="1" x2="1" y2="0"><stop offset="0" stop-color="#0052ff"></stop><stop offset=".55" stop-color="#0a7dff"></stop><stop offset=".551" stop-color="#0a8cff"></stop><stop offset="1" stop-color="#0a9dff"></stop></linearGradient>
<clipPath id="chc"><circle cx="1127.700" cy="1400" r="22.200"></circle></clipPath>
</defs>
<!-- windows logo -->
<path d="M31.600 1388.200l13.400-1.900v13h-13.400zM46.600 1386.100l17.600-2.500v15.700h-17.600zM31.600 1400.800h13.400v13l-13.400-1.900zM46.600 1400.800h17.600v15.600l-17.600-2.500z" fill="#000"></path>
<!-- search icon -->
<circle cx="140.600" cy="1395.300" r="10.500" fill="none" stroke="#111" stroke-width="2.200"></circle><path d="M133.500 1403l-13 12.500" stroke="#111" stroke-width="2.400"></path>
<!-- cortana -->
<circle cx="832.100" cy="1400" r="13.200" fill="none" stroke="#000" stroke-width="4.400"></circle><circle cx="832.100" cy="1400" r="15.600" fill="none" stroke="#555" stroke-width=".800" opacity=".7"></circle>
<!-- task view -->
<g fill="none" stroke="#000" stroke-width="2.300"><rect x="913.200" y="1394.700" width="20.200" height="11.200"></rect><path d="M913.200 1385v4.500h20.200v-4.500M913.200 1415v-4.500h20.200v4.500M940.700 1385v7M940.700 1403v12"></path></g><circle cx="940.700" cy="1396.300" r="3" fill="#000"></circle>
<!-- folder -->
<path d="M1009 1385a2 2 0 0 1 2-2h13.500l3.500 3.500h-19z" fill="#e6a60a"></path><path d="M1009 1386.500h40a2 2 0 0 1 2 2v25.500a2 2 0 0 1-2 2h-38a2 2 0 0 1-2-2z" fill="#fcd462"></path><path d="M1028 1386.500l-3.500 3.500h-15.500v-3.500z" fill="#f5c33c"></path>
<path d="M1016 1402a2 2 0 0 1 2-2h24a2 2 0 0 1 2 2v14.500h-7v-9.500h-14v9.500h-7z" fill="#3a93dc"></path>
<!-- chrome -->
<g clip-path="url(#chc)"><rect x="1105" y="1377" width="46" height="46" fill="#fbc53d"></rect><path d="M1127.700 1400L1105 1385l2-8h44v11h-23.300z" fill="#dc4b3e"></path><path d="M1127.700 1400l-11 23h-14v-42l6 2z" fill="#1ea362"></path><path d="M1108.500 1389l19.200 11 20-11c-3-8-10-12-20-12-9 0-16 4-19.200 12z" fill="#dc4b3e"></path><path d="M1127.700 1400l-8.700 19c-7-3-12.500-10-13.500-19 0-4 1-8 3-11z" fill="#1ea362"></path></g>
<circle cx="1127.700" cy="1400" r="10.200" fill="#f4f4f4"></circle><circle cx="1127.700" cy="1400" r="8" fill="#4c8bf5"></circle>
<!-- word -->
<path d="M1215 1379h32a2 2 0 0 1 2 2v8.500h-36v-8.500a2 2 0 0 1 2-2z" fill="#41a5ee"></path><rect x="1213" y="1389.500" width="36" height="10.400" fill="#2b7cd3"></rect><rect x="1213" y="1399.900" width="36" height="10.400" fill="#185abd"></rect><path d="M1213 1410.300h36v8.200a2 2 0 0 1-2 2h-32a2 2 0 0 1-2-2z" fill="#103f91"></path>
<rect x="1202" y="1388" width="24" height="24" rx="2" fill="#185abd"></rect><path d="M1206.500 1393.500l3.200 13 4.300-11.500 4.300 11.500 3.200-13" fill="none" stroke="#fff" stroke-width="2.400" stroke-linejoin="miter"></path>
<!-- vscode -->
<path d="M1336 1377l12 5.500v35l-12 5.500z" fill="#2aaaf0"></path><path d="M1336 1377v12l-28 24.500-6-4.500a2 2 0 0 1 0-3z" fill="#0b80c8"></path><path d="M1336 1423v-12l-28-24.500-6 4.500a2 2 0 0 0 0 3z" fill="#1593d8"></path><path d="M1336 1389l-14 11 14 11z" fill="#c8e6ea"></path>
<!-- edge -->
<path d="M1402 1397c2-11 10-18 21-18 12 0 19 8 19 20v3h-27c.5 7 5 11 13 11 4 0 8-1 12-3v8c-4 2-9 3-14 3-13 0-21-8-21-19 0-8 4-14 10-17-7 1-11 5-13 12z" fill="#0a78d4"></path><path d="M1415.500 1395h14c0-5-2.500-8-7-8s-6.500 3-7 8z" fill="#c8e5ea"></path>
<!-- tencent meeting -->
<rect x="1496" y="1376" width="48" height="48" fill="url(#tmg)"></rect><path d="M1501.500 1402.500l10-10 10 10-6 6h-8z" fill="#dfe8ff"></path><path d="M1511.500 1392.500l5 5-5 5z" fill="#a9c0ff"></path><path d="M1513.500 1402l11.500-11.500 13.500 13.500-5.500 5.500-6.500-6.500-6.500 6.500z" fill="#fff"></path>
<!-- tray -->
<path d="M1943.500 1407l12.500-12.500 12.500 12.500" fill="none" stroke="#000" stroke-width="2.200"></path>
<rect x="1996" y="1384" width="13" height="22" rx="4" fill="#000"></rect><path d="M1992 1399v2a10.500 10.500 0 0 0 21 0v-2M2002.500 1411.500v4M1997.500 1416h10" fill="none" stroke="#000" stroke-width="2"></path>
<g fill="none" stroke="#000" stroke-width="2"><rect x="2041.500" y="1392.500" width="23.500" height="16.500"></rect><path d="M2065 1397h2.500v7.500h-2.500"></path><path d="M2036 1388v4M2040 1388v4M2034.500 1392.500h7v3a3.500 3.500 0 0 1-7 0zM2038 1399v9.500h3.500"></path></g><path d="M2046.500 1396h14.500v9.500h-17z" fill="#000"></path>
<g fill="none" stroke="#000" stroke-width="2.200"><path d="M2090.500 1413.500a22 22 0 0 1 22-22M2097 1413.500a15.500 15.500 0 0 1 15.500-15.500M2103.500 1413.500a9 9 0 0 1 9-9"></path></g><circle cx="2111.500" cy="1411.500" r="2.800" fill="#000"></circle>
<g fill="none" stroke="#000" stroke-width="2"><path d="M2132.500 1395h5l6.500-6.500v23l-6.500-6.500h-5zM2148.500 1395.500a6 6 0 0 1 0 9M2152.500 1391.500a11.500 11.500 0 0 1 0 17"></path><path d="M2157 1388a16.500 16.500 0 0 1 0 24" stroke="#8a8f94"></path></g>
<g fill="none" stroke="#000" stroke-width="2"><path d="M2211 1385.500l4 2.500-13.500 24-5 3.500.5-6zM2207.500 1390l4.500 2.500M2197 1402.500c-5 0-8.500 2.500-8.500 6s3 5 6.500 4.500M2213 1397c5 0 7.500 2 7 4.500s-4 3.500-9.500 3"></path></g>
<!-- notification -->
<path d="M2478 1384h32v25.500h-21l-5.500 5v-5h-5.500z" fill="#000"></path><path d="M2484 1391h20M2484 1396.500h20M2484 1402h20" stroke="#cddfe8" stroke-width="1.800"></path>
<circle cx="2508" cy="1414" r="16" fill="#c9c9c9" stroke="#8a8a8a" stroke-width="1.200"></circle><path d="M2494 1407a16 16 0 0 1 10-8.500" fill="none" stroke="#9a9a9a" stroke-width="5" opacity=".5"></path>
</svg>
<span class="t" style="font-size: 23px; font-weight: bold; color: rgb(0, 0, 0); letter-spacing: 0px; left: 2501.5px; line-height: 32px; top: 1398.5px;">2</span>
<!-- ===== floating overlays ===== -->
<div class="b" style="left:64px;top:156px;width:156px;height:60px;background:rgba(24,24,24,.66);border-radius:7px 0 0 7px"></div>
<div class="b" style="left:220px;top:156px;width:120px;height:60px;background:rgba(43,43,43,.52);border-radius:0 7px 7px 0"></div>
<span class="t cjk" style="font-size: 24px; color: rgb(255, 255, 255); text-shadow: rgba(0, 0, 0, 0.5) 0px 1px 2px; letter-spacing: 0.85px; left: 127px; line-height: 34px; top: 170.5px;">录制中</span>
<div class="b" style="left:24px;top:1156px;width:168px;height:60px;border-radius:30px;background:rgba(24,24,24,.477)"></div>
<div class="b" style="left:134px;top:1166px;width:2px;height:40px;background:rgba(255,255,255,.28)"></div>
<svg class="L" viewBox="0 0 2560 1440">
<circle cx="94" cy="186" r="13" fill="none" stroke="#c9352d" stroke-width="2"></circle><circle cx="94" cy="186" r="8.200" fill="#cb352c"></circle>
<rect x="238" y="174" width="8" height="24" rx="4" fill="#fff"></rect><rect x="254" y="174" width="8" height="24" rx="4" fill="#fff"></rect>
<rect x="298" y="174" width="24" height="24" rx="3" fill="#fff"></rect>
<!-- emoji bar -->
<circle cx="57.900" cy="1186" r="16.200" fill="#969593"></circle><circle cx="52" cy="1181.300" r="2.100" fill="#262422"></circle><circle cx="64" cy="1181.300" r="2.100" fill="#262422"></circle><path d="M47.500 1189.500h21a10.500 10.500 0 0 1-21 0z" fill="#262422"></path>
<path d="M94.500 1172h23a2.500 2.500 0 0 1 2.500 2.500v21c0 3-3 4.500-9 4.500v-4h-16.500a2.500 2.500 0 0 1-2.500-2.500v-19a2.500 2.500 0 0 1 2.500-2.500z" fill="#969593"></path>
<circle cx="98.300" cy="1183.600" r="2.500" fill="#262422"></circle><circle cx="106" cy="1183.600" r="2.500" fill="#262422"></circle><circle cx="113.700" cy="1183.600" r="2.500" fill="#262422"></circle>
<path d="M163 1178l-8.500 8 8.500 8" fill="none" stroke="#c8c8c8" stroke-width="1.800"></path>
<!-- mouse cursor -->
<path d="M294.500 127.500v18.500l4.100-3.700 3.200 7 3.200-1.400-3.200-7 5.600-.4z" fill="#fff" stroke="#1a1a1a" stroke-width="1.200" stroke-linejoin="round" clip-path="url(#curc)"></path>
<defs><clipPath id="curc"><rect x="280" y="131.500" width="40" height="30"></rect></clipPath></defs>
</svg>


</body></html>
